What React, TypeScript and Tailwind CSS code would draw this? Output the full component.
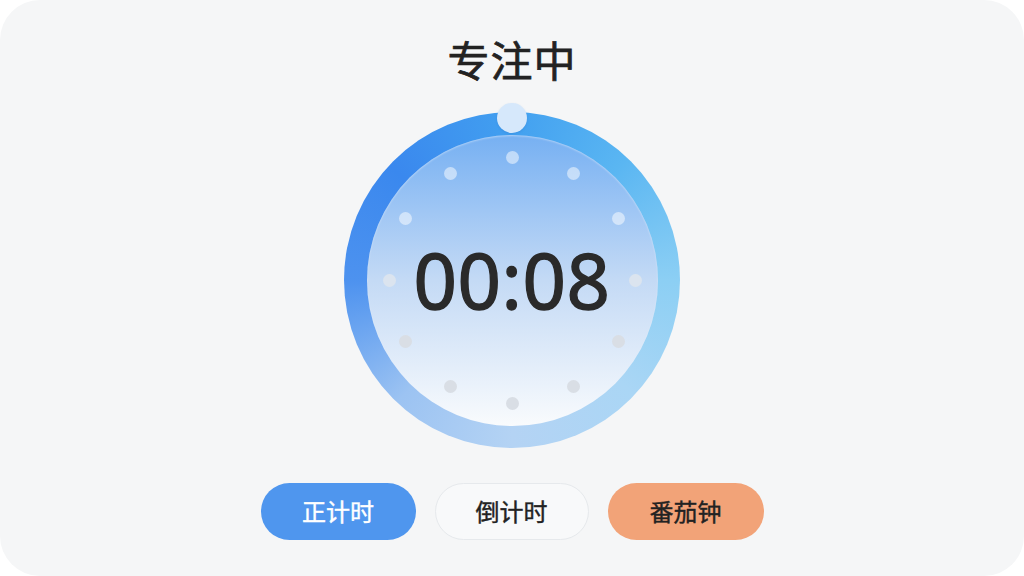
import React from "react";

const dots = Array.from({ length: 12 }, (_, i) => i);

function dotColor(i: number) {
  // top dots read lighter than the blue, bottom dots read greyer than the white
  const a = (i * 30) % 360;
  const fromTop = Math.min(a, 360 - a);
  if (fromTop <= 60) return "bg-white/50";
  if (fromTop <= 90) return "bg-[#dbe4ef]";
  return "bg-[#d9dee5]";
}

export default function App() {
  return (
    <div className="w-screen h-[576px] bg-white overflow-hidden" style={{ fontFamily: '"Noto Sans", "Noto Sans CJK SC", sans-serif' }}>
      <div className="w-full h-full rounded-[40px] bg-[#f5f6f7] flex flex-col items-center pt-[40px]">
        <h1 className="text-[42px] leading-none font-normal text-[#222222] tracking-[1px] [-webkit-text-stroke:0.7px_#222222]">专注中</h1>

        <div className="relative mt-[30px] w-[336px] h-[336px] rounded-full bg-[conic-gradient(from_0deg,#42a0f0,#5ab6f2_12%,#8ccff4_25%,#aad6f5_37%,#b4d3f4_50%,#9cc3f2_62%,#4d92ef_75%,#3a88ee_87%,#42a0f0)] flex items-center justify-center">
          <div className="absolute left-1/2 top-[-9px] -translate-x-1/2 w-[30px] h-[30px] rounded-full bg-[#d6e8fb] shadow-[0_1px_2px_rgba(40,110,200,0.25)]" />
          <div className="relative w-[291px] h-[291px] rounded-full bg-gradient-to-b from-[#76b0f2] via-[#c4daf5] to-[#f9fbfd] shadow-[inset_0_1px_2px_rgba(255,255,255,0.4)] flex items-center justify-center">
            {dots.map((i) => {
              const ang = (i * 30 * Math.PI) / 180;
              const r = 123;
              return (
                <div
                  key={i}
                  className={`absolute w-[13px] h-[13px] rounded-full ${dotColor(i)}`}
                  style={{
                    left: 145.5 + r * Math.sin(ang) - 6.5,
                    top: 145.5 - r * Math.cos(ang) - 6.5,
                  }}
                />
              );
            })}
            <span className="relative text-[76px] leading-none font-normal text-[#2a2a2a] tracking-[0.5px] [-webkit-text-stroke:1.4px_#2a2a2a]">00:08</span>
          </div>
        </div>

        <div className="mt-[35px] flex gap-[19px]">
          <button className="w-[155px] h-[57px] rounded-full bg-[#4f96ee] text-white text-[24px] font-normal [-webkit-text-stroke:0.4px_#ffffff]">正计时</button>
          <button className="w-[154px] h-[57px] rounded-full bg-[#f8f9fa] border border-[#e6e9ec] text-[#222222] text-[24px] font-normal [-webkit-text-stroke:0.4px_#222222]">倒计时</button>
          <button className="w-[156px] h-[57px] rounded-full bg-[#f2a378] text-[#222222] text-[24px] font-normal [-webkit-text-stroke:0.4px_#222222]">番茄钟</button>
        </div>
      </div>
    </div>
  );
}
